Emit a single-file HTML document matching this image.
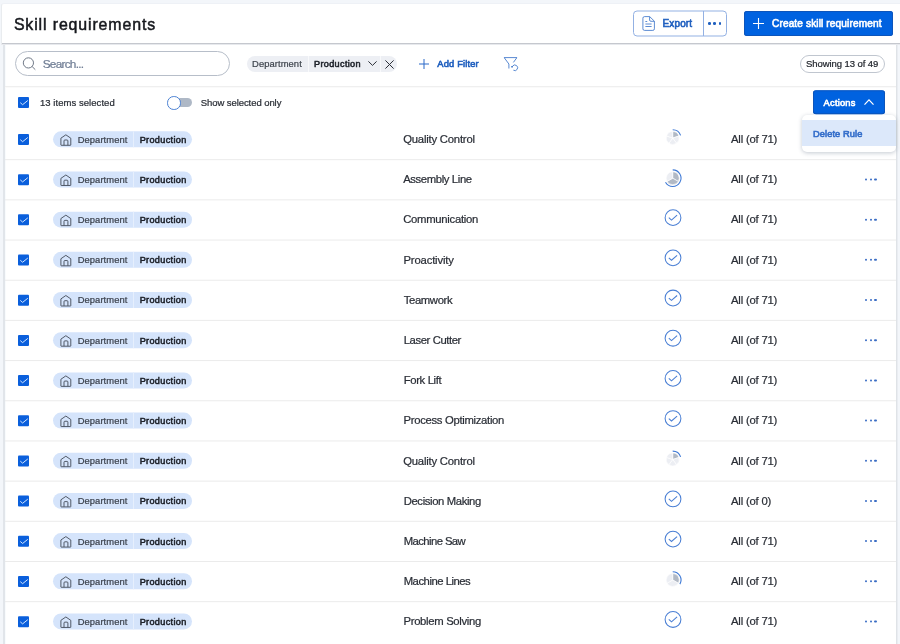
<!DOCTYPE html>
<html lang="en"><head><meta charset="utf-8"><title>Skill requirements</title>
<style>
html,body{margin:0;padding:0}
body{width:900px;height:644px;overflow:hidden;background:#f3f6fa;font-family:"Liberation Sans",sans-serif;position:relative}
.t{position:absolute;white-space:nowrap;display:block}
.abs{position:absolute}
svg{position:absolute;overflow:visible}
.hdr{position:absolute;left:1px;top:3px;width:899px;height:42px;box-sizing:border-box;background:#fff;border-top-left-radius:3px;border-top:1px solid #eef1f6;border-left:1px solid #e9ecef;border-bottom:1px solid #e7e9ed;box-shadow:inset 0 -1px 0 #c5c8ce}
.content{position:absolute;left:3px;top:45px;width:894px;height:599px;box-sizing:border-box;background:#fff;border-left:2px solid #e1e5ea;border-right:1px solid #dfe3e7;box-shadow:1px 0 0 #eaedf2,inset 1px 0 0 #f8fbfd}
.sep{position:absolute;left:5px;width:891px;height:1px;background:#efefef;box-shadow:0 1px 0 #fafafa}
.row{position:absolute;left:0;top:0;width:900px;height:40px}
.cb{position:absolute;left:18px;width:11px;height:11px;background:#0a5fdc;border-radius:1px}
.chip{position:absolute;left:53px;width:138.7px;height:16px;border-radius:8px;background:#d5e4fb}
.chip i{position:absolute;left:80.3px;top:0;width:1px;height:100%;background:#e6effd}
#app{position:absolute;left:0;top:0;width:900px;height:644px;will-change:transform}
</style></head><body><div id="app">

<div class="content"></div>
<div class="hdr"></div>
<span class="t" style="left:13.90px;top:14.80px;font-size:15.9px;line-height:20px;letter-spacing:0.879px;color:#16181d;-webkit-text-stroke:0.5px #16181d;">Skill requirements</span>
<div class="abs" style="left:633px;top:10px;width:94px;height:26px;border:1px solid #93b1e3;border-radius:4px;box-sizing:border-box;transform:translateY(.5px)"></div>
<div class="abs" style="left:703px;top:11px;width:1px;height:25px;background:#93b1e3"></div>
<svg style="left:642px;top:15.7px" width="13" height="15" viewBox="0 0 13 15" fill="none" stroke="#2f6bc6" stroke-opacity=".78" stroke-width="1"><path d="M2.5 .6h5.2l4.7 4.6v7.6a1.6 1.6 0 0 1-1.6 1.6H2.5A1.6 1.6 0 0 1 .9 12.8V2.2A1.6 1.6 0 0 1 2.5 .6z"/><path d="M7.6 .8v3.2a1.3 1.3 0 0 0 1.3 1.3h3.3"/><path d="M3.4 5.5h1.8M3.4 8h6.2M3.4 10.5h6.2"/></svg>
<span class="t" style="left:662.60px;top:17.80px;font-size:10.0px;line-height:12px;letter-spacing:0.100px;color:#1f5fbf;-webkit-text-stroke:0.6px #1f5fbf;">Export</span>
<div class="abs" style="left:708.1px;top:22.3px;width:2.6px;height:2.6px;border-radius:50%;background:#1f5fbf"></div>
<div class="abs" style="left:713.4px;top:22.3px;width:2.6px;height:2.6px;border-radius:50%;background:#1f5fbf"></div>
<div class="abs" style="left:718.7px;top:22.3px;width:2.6px;height:2.6px;border-radius:50%;background:#1f5fbf"></div>
<div class="abs" style="left:744px;top:11px;width:149px;height:25px;background:#0062e0;border-radius:3px;box-shadow:inset 0 0 0 1px #0d55bb"></div>
<svg style="left:752.5px;top:18px" width="11" height="11" viewBox="0 0 11 11" stroke="#fff" stroke-width="1.1"><path d="M5.5 0v11M0 5.5h11"/></svg>
<span class="t" style="left:772.00px;top:17.30px;font-size:10.1px;line-height:13px;letter-spacing:0.124px;color:#fff;-webkit-text-stroke:0.6px #fff;">Create skill requirement</span>
<div class="abs" style="left:15px;top:51px;width:215px;height:25px;box-sizing:border-box;border:1px solid #b7bec9;border-radius:13px;background:#fff"></div>
<svg style="left:22px;top:57px" width="15" height="14" viewBox="0 0 15 14" fill="none" stroke="#6f7886" stroke-width="1"><circle cx="6.4" cy="5.9" r="5.1"/><path d="M10.1 9.5l3.2 3.2"/></svg>
<span class="t" style="left:42.70px;top:56.80px;font-size:11.8px;line-height:15px;letter-spacing:-0.740px;color:#6f7d94;-webkit-text-stroke:0.22px #6f7d94;">Search...</span>
<div class="abs" style="left:246.7px;top:56px;width:150px;height:15.6px;border-radius:8px;background:#edeff4"></div>
<div class="abs" style="left:308px;top:56px;width:1px;height:15.6px;background:#f8f9fb"></div>
<div class="abs" style="left:380px;top:56px;width:1px;height:15.6px;background:#f8f9fb"></div>
<span class="t" style="left:252.10px;top:57.80px;font-size:9.4px;line-height:12px;letter-spacing:0.076px;color:#40464f;-webkit-text-stroke:0.22px #40464f;">Department</span>
<span class="t" style="left:314.00px;top:58.80px;font-size:9.1px;line-height:11px;letter-spacing:0.344px;color:#1d2129;-webkit-text-stroke:0.55px #1d2129;">Production</span>
<svg style="left:367.8px;top:61.2px" width="9" height="5" viewBox="0 0 9 5" fill="none" stroke="#2b2f38" stroke-width="1"><path d="M.4 .4l4.1 4 4.1-4"/></svg>
<svg style="left:384.6px;top:59.6px" width="9" height="9" viewBox="0 0 9 9" fill="none" stroke="#2b2f38" stroke-width="1"><path d="M.4 .4l8.2 8.2M8.6 .4L.4 8.6"/></svg>
<svg style="left:419px;top:58.5px" width="10" height="10" viewBox="0 0 10 10" stroke="#2a68c8" stroke-width="1"><path d="M5 0v10M0 5h10"/></svg>
<span class="t" style="left:437.30px;top:58.30px;font-size:9.3px;line-height:12px;letter-spacing:0.178px;color:#1f5fbf;-webkit-text-stroke:0.6px #1f5fbf;">Add Filter</span>
<svg style="left:503px;top:56px" width="16" height="16" viewBox="0 0 16 16" fill="none" stroke="#2f6bc6" stroke-opacity=".8" stroke-width="1"><path d="M1 1.600H14M1.300 1.800L5.900 8V12.500M13.800 1.800L10.400 6.400"/><path d="M9.600 10.100A2.800 2.800 0 1 1 10.400 14.200"/><rect x="8.300" y="10" width="1.500" height="1.500" fill="#2f6bc6" stroke="none"/></svg>
<div class="abs" style="left:800px;top:55px;width:85px;height:17.5px;box-sizing:border-box;border:1px solid #c0c6cf;border-radius:9px;background:#fff"></div>
<span class="t" style="left:806.10px;top:57.80px;font-size:9.5px;line-height:12px;letter-spacing:-0.081px;color:#23272e;-webkit-text-stroke:0.22px #23272e;">Showing 13 of 49</span>
<div class="sep" style="top:86px"></div>
<div class="cb" style="top:97px"><svg style="left:1.5px;top:2.8px" width="8" height="6" viewBox="0 0 8 6" fill="none" stroke="#d4e7ff" stroke-width="1"><path d="M.3 2.700l2.300 2L7.800 .5"/></svg></div>
<span class="t" style="left:40.00px;top:96.80px;font-size:9.5px;line-height:12px;letter-spacing:0.048px;color:#2a2e36;-webkit-text-stroke:0.22px #2a2e36;">13 items selected</span>
<div class="abs" style="left:170px;top:98.2px;width:22px;height:9px;border-radius:5px;background:#aeb8c6"></div>
<div class="abs" style="left:167px;top:96px;width:11.5px;height:11.5px;border-radius:50%;background:#fff;border:1px solid #4a80d2"></div>
<span class="t" style="left:200.75px;top:96.80px;font-size:9.5px;line-height:12px;letter-spacing:-0.071px;color:#2a2e36;-webkit-text-stroke:0.22px #2a2e36;">Show selected only</span>
<div class="row" style="transform:translateY(119.30px)">
<div class="cb" style="top:15px;transform:translateY(-.3px)"><svg style="left:1.5px;top:2.8px" width="8" height="6" viewBox="0 0 8 6" fill="none" stroke="#d4e7ff" stroke-width="1"><path d="M.3 2.700l2.300 2L7.800 .5"/></svg></div>
<div class="chip" style="top:11.9px"><i></i></div><svg style="left:59.6px;top:13.9px" width="12" height="12.4" viewBox="0 0 12 12.4" fill="none" stroke="#4a5260" stroke-width="0.95" stroke-linejoin="round"><path d="M.9 11.700V4.900L5.850 1.500l4.950 3.400v6.800a.3 .3 0 0 1-.3 .3H1.200a.3 .3 0 0 1-.3-.3z"/><path d="M4 11.900V7.600a.9 .9 0 0 1 .9-.9h2.100a.9 .9 0 0 1 .9 .9v4.300"/></svg>
<span class="t" style="left:77.70px;top:14.80px;font-size:9.4px;line-height:12px;letter-spacing:0.076px;color:#3c424d;-webkit-text-stroke:0.22px #3c424d;">Department</span>
<span class="t" style="left:139.70px;top:15.80px;font-size:9.1px;line-height:11px;letter-spacing:0.344px;color:#1d2129;-webkit-text-stroke:0.55px #1d2129;">Production</span>
<span class="t" style="left:403.20px;top:13.30px;font-size:11.3px;line-height:14px;letter-spacing:-0.210px;color:#2a2e36;-webkit-text-stroke:0.22px #2a2e36;">Quality Control</span>
<svg style="left:0;top:0" width="900" height="40"><path d="M672.70 18.70L672.70 12.20A6.5 6.5 0 0 1 678.88 16.69Z" fill="#b1b9c5" stroke="#fff" stroke-width="0.6"/><path d="M672.70 18.70L678.88 16.69A6.5 6.5 0 0 1 676.52 23.96Z" fill="#eceef3" stroke="#fff" stroke-width="0.6"/><path d="M672.70 18.70L676.52 23.96A6.5 6.5 0 0 1 668.88 23.96Z" fill="#eceef3" stroke="#fff" stroke-width="0.6"/><path d="M672.70 18.70L668.88 23.96A6.5 6.5 0 0 1 666.52 16.69Z" fill="#eceef3" stroke="#fff" stroke-width="0.6"/><path d="M672.70 18.70L666.52 16.69A6.5 6.5 0 0 1 672.70 12.20Z" fill="#eceef3" stroke="#fff" stroke-width="0.6"/><path d="M672.70 10.40A8.3 8.3 0 0 1 680.59 16.14" fill="none" stroke="#3f7ad6" stroke-width="1.1"/></svg>
<span class="t" style="left:731.00px;top:13.30px;font-size:11.3px;line-height:14px;letter-spacing:-0.200px;color:#2a2e36;-webkit-text-stroke:0.22px #2a2e36;">All (of 71)</span>
</div>
<div class="row" style="transform:translateY(159.48px)">
<div class="sep" style="top:0;box-shadow:none;background:#ebebeb;transform:translateY(-.3px)"></div>
<div class="cb" style="top:15px;transform:translateY(-.3px)"><svg style="left:1.5px;top:2.8px" width="8" height="6" viewBox="0 0 8 6" fill="none" stroke="#d4e7ff" stroke-width="1"><path d="M.3 2.700l2.300 2L7.800 .5"/></svg></div>
<div class="chip" style="top:11.9px"><i></i></div><svg style="left:59.6px;top:13.9px" width="12" height="12.4" viewBox="0 0 12 12.4" fill="none" stroke="#4a5260" stroke-width="0.95" stroke-linejoin="round"><path d="M.9 11.700V4.900L5.850 1.500l4.950 3.400v6.800a.3 .3 0 0 1-.3 .3H1.200a.3 .3 0 0 1-.3-.3z"/><path d="M4 11.900V7.600a.9 .9 0 0 1 .9-.9h2.100a.9 .9 0 0 1 .9 .9v4.300"/></svg>
<span class="t" style="left:77.70px;top:14.80px;font-size:9.4px;line-height:12px;letter-spacing:0.076px;color:#3c424d;-webkit-text-stroke:0.22px #3c424d;">Department</span>
<span class="t" style="left:139.70px;top:15.80px;font-size:9.1px;line-height:11px;letter-spacing:0.344px;color:#1d2129;-webkit-text-stroke:0.55px #1d2129;">Production</span>
<span class="t" style="left:403.20px;top:13.30px;font-size:11.3px;line-height:14px;letter-spacing:-0.382px;color:#2a2e36;-webkit-text-stroke:0.22px #2a2e36;">Assembly Line</span>
<svg style="left:0;top:0" width="900" height="40"><path d="M672.70 18.70L672.70 12.20A6.5 6.5 0 0 1 678.33 21.95Z" fill="#b1b9c5" stroke="#fff" stroke-width="0.6"/><path d="M672.70 18.70L678.33 21.95A6.5 6.5 0 0 1 667.07 21.95Z" fill="#b1b9c5" stroke="#fff" stroke-width="0.6"/><path d="M672.70 18.70L667.07 21.95A6.5 6.5 0 0 1 672.70 12.20Z" fill="#eceef3" stroke="#fff" stroke-width="0.6"/><path d="M672.70 10.40A8.3 8.3 0 1 1 665.51 22.85" fill="none" stroke="#3f7ad6" stroke-width="1.1"/></svg>
<span class="t" style="left:731.00px;top:13.30px;font-size:11.3px;line-height:14px;letter-spacing:-0.200px;color:#2a2e36;-webkit-text-stroke:0.22px #2a2e36;">All (of 71)</span>
<div class="abs" style="left:864.95px;top:19.20px;width:2.3px;height:2.3px;border-radius:50%;background:#3a6dc4"></div>
<div class="abs" style="left:869.65px;top:19.20px;width:2.3px;height:2.3px;border-radius:50%;background:#3a6dc4"></div>
<div class="abs" style="left:874.35px;top:19.20px;width:2.3px;height:2.3px;border-radius:50%;background:#3a6dc4"></div>
</div>
<div class="row" style="transform:translateY(199.66px)">
<div class="sep" style="top:0;box-shadow:none;background:#ebebeb;transform:translateY(-.3px)"></div>
<div class="cb" style="top:15px;transform:translateY(-.3px)"><svg style="left:1.5px;top:2.8px" width="8" height="6" viewBox="0 0 8 6" fill="none" stroke="#d4e7ff" stroke-width="1"><path d="M.3 2.700l2.300 2L7.800 .5"/></svg></div>
<div class="chip" style="top:11.9px"><i></i></div><svg style="left:59.6px;top:13.9px" width="12" height="12.4" viewBox="0 0 12 12.4" fill="none" stroke="#4a5260" stroke-width="0.95" stroke-linejoin="round"><path d="M.9 11.700V4.900L5.850 1.500l4.950 3.400v6.800a.3 .3 0 0 1-.3 .3H1.200a.3 .3 0 0 1-.3-.3z"/><path d="M4 11.900V7.600a.9 .9 0 0 1 .9-.9h2.100a.9 .9 0 0 1 .9 .9v4.300"/></svg>
<span class="t" style="left:77.70px;top:13.80px;font-size:9.4px;line-height:12px;letter-spacing:0.076px;color:#3c424d;-webkit-text-stroke:0.22px #3c424d;">Department</span>
<span class="t" style="left:139.70px;top:14.80px;font-size:9.1px;line-height:11px;letter-spacing:0.344px;color:#1d2129;-webkit-text-stroke:0.55px #1d2129;">Production</span>
<span class="t" style="left:403.20px;top:12.30px;font-size:11.3px;line-height:14px;letter-spacing:-0.283px;color:#2a2e36;-webkit-text-stroke:0.22px #2a2e36;">Communication</span>
<svg style="left:663.50px;top:9.10px" width="18" height="18" viewBox="0 0 18 18" fill="none" stroke="#4a7fd4" stroke-width="1.05"><circle cx="9" cy="9" r="7.9"/><path d="M4.8 9l2.7 2.4 5.6-4.9"/></svg>
<span class="t" style="left:731.00px;top:12.30px;font-size:11.3px;line-height:14px;letter-spacing:-0.200px;color:#2a2e36;-webkit-text-stroke:0.22px #2a2e36;">All (of 71)</span>
<div class="abs" style="left:864.95px;top:19.20px;width:2.3px;height:2.3px;border-radius:50%;background:#3a6dc4"></div>
<div class="abs" style="left:869.65px;top:19.20px;width:2.3px;height:2.3px;border-radius:50%;background:#3a6dc4"></div>
<div class="abs" style="left:874.35px;top:19.20px;width:2.3px;height:2.3px;border-radius:50%;background:#3a6dc4"></div>
</div>
<div class="row" style="transform:translateY(239.84px)">
<div class="sep" style="top:0;box-shadow:none;background:#ebebeb;transform:translateY(-.3px)"></div>
<div class="cb" style="top:15px;transform:translateY(-.3px)"><svg style="left:1.5px;top:2.8px" width="8" height="6" viewBox="0 0 8 6" fill="none" stroke="#d4e7ff" stroke-width="1"><path d="M.3 2.700l2.300 2L7.800 .5"/></svg></div>
<div class="chip" style="top:11.9px"><i></i></div><svg style="left:59.6px;top:13.9px" width="12" height="12.4" viewBox="0 0 12 12.4" fill="none" stroke="#4a5260" stroke-width="0.95" stroke-linejoin="round"><path d="M.9 11.700V4.900L5.850 1.500l4.950 3.400v6.800a.3 .3 0 0 1-.3 .3H1.200a.3 .3 0 0 1-.3-.3z"/><path d="M4 11.900V7.600a.9 .9 0 0 1 .9-.9h2.100a.9 .9 0 0 1 .9 .9v4.300"/></svg>
<span class="t" style="left:77.70px;top:13.80px;font-size:9.4px;line-height:12px;letter-spacing:0.076px;color:#3c424d;-webkit-text-stroke:0.22px #3c424d;">Department</span>
<span class="t" style="left:139.70px;top:14.80px;font-size:9.1px;line-height:11px;letter-spacing:0.344px;color:#1d2129;-webkit-text-stroke:0.55px #1d2129;">Production</span>
<span class="t" style="left:403.50px;top:13.30px;font-size:11.3px;line-height:14px;letter-spacing:-0.172px;color:#2a2e36;-webkit-text-stroke:0.22px #2a2e36;">Proactivity</span>
<svg style="left:663.50px;top:9.10px" width="18" height="18" viewBox="0 0 18 18" fill="none" stroke="#4a7fd4" stroke-width="1.05"><circle cx="9" cy="9" r="7.9"/><path d="M4.8 9l2.7 2.4 5.6-4.9"/></svg>
<span class="t" style="left:731.00px;top:13.30px;font-size:11.3px;line-height:14px;letter-spacing:-0.200px;color:#2a2e36;-webkit-text-stroke:0.22px #2a2e36;">All (of 71)</span>
<div class="abs" style="left:864.95px;top:19.20px;width:2.3px;height:2.3px;border-radius:50%;background:#3a6dc4"></div>
<div class="abs" style="left:869.65px;top:19.20px;width:2.3px;height:2.3px;border-radius:50%;background:#3a6dc4"></div>
<div class="abs" style="left:874.35px;top:19.20px;width:2.3px;height:2.3px;border-radius:50%;background:#3a6dc4"></div>
</div>
<div class="row" style="transform:translateY(280.02px)">
<div class="sep" style="top:0;box-shadow:none;background:#ebebeb;transform:translateY(-.3px)"></div>
<div class="cb" style="top:15px;transform:translateY(-.3px)"><svg style="left:1.5px;top:2.8px" width="8" height="6" viewBox="0 0 8 6" fill="none" stroke="#d4e7ff" stroke-width="1"><path d="M.3 2.700l2.300 2L7.800 .5"/></svg></div>
<div class="chip" style="top:11.9px"><i></i></div><svg style="left:59.6px;top:13.9px" width="12" height="12.4" viewBox="0 0 12 12.4" fill="none" stroke="#4a5260" stroke-width="0.95" stroke-linejoin="round"><path d="M.9 11.700V4.900L5.850 1.500l4.950 3.400v6.800a.3 .3 0 0 1-.3 .3H1.200a.3 .3 0 0 1-.3-.3z"/><path d="M4 11.900V7.600a.9 .9 0 0 1 .9-.9h2.100a.9 .9 0 0 1 .9 .9v4.300"/></svg>
<span class="t" style="left:77.70px;top:13.80px;font-size:9.4px;line-height:12px;letter-spacing:0.076px;color:#3c424d;-webkit-text-stroke:0.22px #3c424d;">Department</span>
<span class="t" style="left:139.70px;top:14.80px;font-size:9.1px;line-height:11px;letter-spacing:0.344px;color:#1d2129;-webkit-text-stroke:0.55px #1d2129;">Production</span>
<span class="t" style="left:403.70px;top:13.30px;font-size:11.3px;line-height:14px;letter-spacing:-0.360px;color:#2a2e36;-webkit-text-stroke:0.22px #2a2e36;">Teamwork</span>
<svg style="left:663.50px;top:9.10px" width="18" height="18" viewBox="0 0 18 18" fill="none" stroke="#4a7fd4" stroke-width="1.05"><circle cx="9" cy="9" r="7.9"/><path d="M4.8 9l2.7 2.4 5.6-4.9"/></svg>
<span class="t" style="left:731.00px;top:13.30px;font-size:11.3px;line-height:14px;letter-spacing:-0.200px;color:#2a2e36;-webkit-text-stroke:0.22px #2a2e36;">All (of 71)</span>
<div class="abs" style="left:864.95px;top:19.20px;width:2.3px;height:2.3px;border-radius:50%;background:#3a6dc4"></div>
<div class="abs" style="left:869.65px;top:19.20px;width:2.3px;height:2.3px;border-radius:50%;background:#3a6dc4"></div>
<div class="abs" style="left:874.35px;top:19.20px;width:2.3px;height:2.3px;border-radius:50%;background:#3a6dc4"></div>
</div>
<div class="row" style="transform:translateY(320.20px)">
<div class="sep" style="top:0;box-shadow:none;background:#ebebeb;transform:translateY(-.3px)"></div>
<div class="cb" style="top:15px;transform:translateY(-.3px)"><svg style="left:1.5px;top:2.8px" width="8" height="6" viewBox="0 0 8 6" fill="none" stroke="#d4e7ff" stroke-width="1"><path d="M.3 2.700l2.300 2L7.800 .5"/></svg></div>
<div class="chip" style="top:11.9px"><i></i></div><svg style="left:59.6px;top:13.9px" width="12" height="12.4" viewBox="0 0 12 12.4" fill="none" stroke="#4a5260" stroke-width="0.95" stroke-linejoin="round"><path d="M.9 11.700V4.900L5.850 1.500l4.950 3.400v6.800a.3 .3 0 0 1-.3 .3H1.200a.3 .3 0 0 1-.3-.3z"/><path d="M4 11.900V7.600a.9 .9 0 0 1 .9-.9h2.100a.9 .9 0 0 1 .9 .9v4.300"/></svg>
<span class="t" style="left:77.70px;top:14.80px;font-size:9.4px;line-height:12px;letter-spacing:0.076px;color:#3c424d;-webkit-text-stroke:0.22px #3c424d;">Department</span>
<span class="t" style="left:139.70px;top:15.80px;font-size:9.1px;line-height:11px;letter-spacing:0.344px;color:#1d2129;-webkit-text-stroke:0.55px #1d2129;">Production</span>
<span class="t" style="left:403.70px;top:13.30px;font-size:11.3px;line-height:14px;letter-spacing:-0.407px;color:#2a2e36;-webkit-text-stroke:0.22px #2a2e36;">Laser Cutter</span>
<svg style="left:663.50px;top:9.10px" width="18" height="18" viewBox="0 0 18 18" fill="none" stroke="#4a7fd4" stroke-width="1.05"><circle cx="9" cy="9" r="7.9"/><path d="M4.8 9l2.7 2.4 5.6-4.9"/></svg>
<span class="t" style="left:731.00px;top:13.30px;font-size:11.3px;line-height:14px;letter-spacing:-0.200px;color:#2a2e36;-webkit-text-stroke:0.22px #2a2e36;">All (of 71)</span>
<div class="abs" style="left:864.95px;top:19.20px;width:2.3px;height:2.3px;border-radius:50%;background:#3a6dc4"></div>
<div class="abs" style="left:869.65px;top:19.20px;width:2.3px;height:2.3px;border-radius:50%;background:#3a6dc4"></div>
<div class="abs" style="left:874.35px;top:19.20px;width:2.3px;height:2.3px;border-radius:50%;background:#3a6dc4"></div>
</div>
<div class="row" style="transform:translateY(360.38px)">
<div class="sep" style="top:0;box-shadow:none;background:#ebebeb;transform:translateY(-.3px)"></div>
<div class="cb" style="top:15px;transform:translateY(-.3px)"><svg style="left:1.5px;top:2.8px" width="8" height="6" viewBox="0 0 8 6" fill="none" stroke="#d4e7ff" stroke-width="1"><path d="M.3 2.700l2.300 2L7.800 .5"/></svg></div>
<div class="chip" style="top:11.9px"><i></i></div><svg style="left:59.6px;top:13.9px" width="12" height="12.4" viewBox="0 0 12 12.4" fill="none" stroke="#4a5260" stroke-width="0.95" stroke-linejoin="round"><path d="M.9 11.700V4.900L5.850 1.500l4.950 3.400v6.800a.3 .3 0 0 1-.3 .3H1.200a.3 .3 0 0 1-.3-.3z"/><path d="M4 11.900V7.600a.9 .9 0 0 1 .9-.9h2.100a.9 .9 0 0 1 .9 .9v4.300"/></svg>
<span class="t" style="left:77.70px;top:14.80px;font-size:9.4px;line-height:12px;letter-spacing:0.076px;color:#3c424d;-webkit-text-stroke:0.22px #3c424d;">Department</span>
<span class="t" style="left:139.70px;top:15.80px;font-size:9.1px;line-height:11px;letter-spacing:0.344px;color:#1d2129;-webkit-text-stroke:0.55px #1d2129;">Production</span>
<span class="t" style="left:403.70px;top:13.30px;font-size:11.3px;line-height:14px;letter-spacing:-0.352px;color:#2a2e36;-webkit-text-stroke:0.22px #2a2e36;">Fork Lift</span>
<svg style="left:663.50px;top:9.10px" width="18" height="18" viewBox="0 0 18 18" fill="none" stroke="#4a7fd4" stroke-width="1.05"><circle cx="9" cy="9" r="7.9"/><path d="M4.8 9l2.7 2.4 5.6-4.9"/></svg>
<span class="t" style="left:731.00px;top:13.30px;font-size:11.3px;line-height:14px;letter-spacing:-0.200px;color:#2a2e36;-webkit-text-stroke:0.22px #2a2e36;">All (of 71)</span>
<div class="abs" style="left:864.95px;top:19.20px;width:2.3px;height:2.3px;border-radius:50%;background:#3a6dc4"></div>
<div class="abs" style="left:869.65px;top:19.20px;width:2.3px;height:2.3px;border-radius:50%;background:#3a6dc4"></div>
<div class="abs" style="left:874.35px;top:19.20px;width:2.3px;height:2.3px;border-radius:50%;background:#3a6dc4"></div>
</div>
<div class="row" style="transform:translateY(400.56px)">
<div class="sep" style="top:0;box-shadow:none;background:#ebebeb;transform:translateY(-.3px)"></div>
<div class="cb" style="top:15px;transform:translateY(-.3px)"><svg style="left:1.5px;top:2.8px" width="8" height="6" viewBox="0 0 8 6" fill="none" stroke="#d4e7ff" stroke-width="1"><path d="M.3 2.700l2.300 2L7.800 .5"/></svg></div>
<div class="chip" style="top:11.9px"><i></i></div><svg style="left:59.6px;top:13.9px" width="12" height="12.4" viewBox="0 0 12 12.4" fill="none" stroke="#4a5260" stroke-width="0.95" stroke-linejoin="round"><path d="M.9 11.700V4.900L5.850 1.500l4.950 3.400v6.800a.3 .3 0 0 1-.3 .3H1.200a.3 .3 0 0 1-.3-.3z"/><path d="M4 11.900V7.600a.9 .9 0 0 1 .9-.9h2.100a.9 .9 0 0 1 .9 .9v4.300"/></svg>
<span class="t" style="left:77.70px;top:13.80px;font-size:9.4px;line-height:12px;letter-spacing:0.076px;color:#3c424d;-webkit-text-stroke:0.22px #3c424d;">Department</span>
<span class="t" style="left:139.70px;top:14.80px;font-size:9.1px;line-height:11px;letter-spacing:0.344px;color:#1d2129;-webkit-text-stroke:0.55px #1d2129;">Production</span>
<span class="t" style="left:403.50px;top:12.30px;font-size:11.3px;line-height:14px;letter-spacing:-0.309px;color:#2a2e36;-webkit-text-stroke:0.22px #2a2e36;">Process Optimization</span>
<svg style="left:663.50px;top:9.10px" width="18" height="18" viewBox="0 0 18 18" fill="none" stroke="#4a7fd4" stroke-width="1.05"><circle cx="9" cy="9" r="7.9"/><path d="M4.8 9l2.7 2.4 5.6-4.9"/></svg>
<span class="t" style="left:731.00px;top:12.30px;font-size:11.3px;line-height:14px;letter-spacing:-0.200px;color:#2a2e36;-webkit-text-stroke:0.22px #2a2e36;">All (of 71)</span>
<div class="abs" style="left:864.95px;top:19.20px;width:2.3px;height:2.3px;border-radius:50%;background:#3a6dc4"></div>
<div class="abs" style="left:869.65px;top:19.20px;width:2.3px;height:2.3px;border-radius:50%;background:#3a6dc4"></div>
<div class="abs" style="left:874.35px;top:19.20px;width:2.3px;height:2.3px;border-radius:50%;background:#3a6dc4"></div>
</div>
<div class="row" style="transform:translateY(440.74px)">
<div class="sep" style="top:0;box-shadow:none;background:#ebebeb;transform:translateY(-.3px)"></div>
<div class="cb" style="top:15px;transform:translateY(-.3px)"><svg style="left:1.5px;top:2.8px" width="8" height="6" viewBox="0 0 8 6" fill="none" stroke="#d4e7ff" stroke-width="1"><path d="M.3 2.700l2.300 2L7.800 .5"/></svg></div>
<div class="chip" style="top:11.9px"><i></i></div><svg style="left:59.6px;top:13.9px" width="12" height="12.4" viewBox="0 0 12 12.4" fill="none" stroke="#4a5260" stroke-width="0.95" stroke-linejoin="round"><path d="M.9 11.700V4.900L5.850 1.500l4.950 3.400v6.800a.3 .3 0 0 1-.3 .3H1.200a.3 .3 0 0 1-.3-.3z"/><path d="M4 11.900V7.600a.9 .9 0 0 1 .9-.9h2.100a.9 .9 0 0 1 .9 .9v4.300"/></svg>
<span class="t" style="left:77.70px;top:13.80px;font-size:9.4px;line-height:12px;letter-spacing:0.076px;color:#3c424d;-webkit-text-stroke:0.22px #3c424d;">Department</span>
<span class="t" style="left:139.70px;top:14.80px;font-size:9.1px;line-height:11px;letter-spacing:0.344px;color:#1d2129;-webkit-text-stroke:0.55px #1d2129;">Production</span>
<span class="t" style="left:403.20px;top:13.30px;font-size:11.3px;line-height:14px;letter-spacing:-0.210px;color:#2a2e36;-webkit-text-stroke:0.22px #2a2e36;">Quality Control</span>
<svg style="left:0;top:0" width="900" height="40"><path d="M672.70 18.70L672.70 12.20A6.5 6.5 0 0 1 678.88 16.69Z" fill="#b1b9c5" stroke="#fff" stroke-width="0.6"/><path d="M672.70 18.70L678.88 16.69A6.5 6.5 0 0 1 676.52 23.96Z" fill="#eceef3" stroke="#fff" stroke-width="0.6"/><path d="M672.70 18.70L676.52 23.96A6.5 6.5 0 0 1 668.88 23.96Z" fill="#eceef3" stroke="#fff" stroke-width="0.6"/><path d="M672.70 18.70L668.88 23.96A6.5 6.5 0 0 1 666.52 16.69Z" fill="#eceef3" stroke="#fff" stroke-width="0.6"/><path d="M672.70 18.70L666.52 16.69A6.5 6.5 0 0 1 672.70 12.20Z" fill="#eceef3" stroke="#fff" stroke-width="0.6"/><path d="M672.70 10.40A8.3 8.3 0 0 1 680.59 16.14" fill="none" stroke="#3f7ad6" stroke-width="1.1"/></svg>
<span class="t" style="left:731.00px;top:13.30px;font-size:11.3px;line-height:14px;letter-spacing:-0.200px;color:#2a2e36;-webkit-text-stroke:0.22px #2a2e36;">All (of 71)</span>
<div class="abs" style="left:864.95px;top:19.20px;width:2.3px;height:2.3px;border-radius:50%;background:#3a6dc4"></div>
<div class="abs" style="left:869.65px;top:19.20px;width:2.3px;height:2.3px;border-radius:50%;background:#3a6dc4"></div>
<div class="abs" style="left:874.35px;top:19.20px;width:2.3px;height:2.3px;border-radius:50%;background:#3a6dc4"></div>
</div>
<div class="row" style="transform:translateY(480.92px)">
<div class="sep" style="top:0;box-shadow:none;background:#ebebeb;transform:translateY(-.3px)"></div>
<div class="cb" style="top:15px;transform:translateY(-.3px)"><svg style="left:1.5px;top:2.8px" width="8" height="6" viewBox="0 0 8 6" fill="none" stroke="#d4e7ff" stroke-width="1"><path d="M.3 2.700l2.300 2L7.800 .5"/></svg></div>
<div class="chip" style="top:11.9px"><i></i></div><svg style="left:59.6px;top:13.9px" width="12" height="12.4" viewBox="0 0 12 12.4" fill="none" stroke="#4a5260" stroke-width="0.95" stroke-linejoin="round"><path d="M.9 11.700V4.900L5.850 1.500l4.950 3.400v6.800a.3 .3 0 0 1-.3 .3H1.200a.3 .3 0 0 1-.3-.3z"/><path d="M4 11.900V7.600a.9 .9 0 0 1 .9-.9h2.100a.9 .9 0 0 1 .9 .9v4.300"/></svg>
<span class="t" style="left:77.70px;top:13.80px;font-size:9.4px;line-height:12px;letter-spacing:0.076px;color:#3c424d;-webkit-text-stroke:0.22px #3c424d;">Department</span>
<span class="t" style="left:139.70px;top:14.80px;font-size:9.1px;line-height:11px;letter-spacing:0.344px;color:#1d2129;-webkit-text-stroke:0.55px #1d2129;">Production</span>
<span class="t" style="left:403.70px;top:13.30px;font-size:11.3px;line-height:14px;letter-spacing:-0.378px;color:#2a2e36;-webkit-text-stroke:0.22px #2a2e36;">Decision Making</span>
<svg style="left:663.50px;top:9.10px" width="18" height="18" viewBox="0 0 18 18" fill="none" stroke="#4a7fd4" stroke-width="1.05"><circle cx="9" cy="9" r="7.9"/><path d="M4.8 9l2.7 2.4 5.6-4.9"/></svg>
<span class="t" style="left:731.00px;top:13.30px;font-size:11.3px;line-height:14px;letter-spacing:-0.200px;color:#2a2e36;-webkit-text-stroke:0.22px #2a2e36;">All (of 0)</span>
<div class="abs" style="left:864.95px;top:19.20px;width:2.3px;height:2.3px;border-radius:50%;background:#3a6dc4"></div>
<div class="abs" style="left:869.65px;top:19.20px;width:2.3px;height:2.3px;border-radius:50%;background:#3a6dc4"></div>
<div class="abs" style="left:874.35px;top:19.20px;width:2.3px;height:2.3px;border-radius:50%;background:#3a6dc4"></div>
</div>
<div class="row" style="transform:translateY(521.10px)">
<div class="sep" style="top:0;box-shadow:none;background:#ebebeb;transform:translateY(-.3px)"></div>
<div class="cb" style="top:15px;transform:translateY(-.3px)"><svg style="left:1.5px;top:2.8px" width="8" height="6" viewBox="0 0 8 6" fill="none" stroke="#d4e7ff" stroke-width="1"><path d="M.3 2.700l2.300 2L7.800 .5"/></svg></div>
<div class="chip" style="top:11.9px"><i></i></div><svg style="left:59.6px;top:13.9px" width="12" height="12.4" viewBox="0 0 12 12.4" fill="none" stroke="#4a5260" stroke-width="0.95" stroke-linejoin="round"><path d="M.9 11.700V4.900L5.850 1.500l4.950 3.400v6.800a.3 .3 0 0 1-.3 .3H1.200a.3 .3 0 0 1-.3-.3z"/><path d="M4 11.900V7.600a.9 .9 0 0 1 .9-.9h2.100a.9 .9 0 0 1 .9 .9v4.300"/></svg>
<span class="t" style="left:77.70px;top:14.80px;font-size:9.4px;line-height:12px;letter-spacing:0.076px;color:#3c424d;-webkit-text-stroke:0.22px #3c424d;">Department</span>
<span class="t" style="left:139.70px;top:15.80px;font-size:9.1px;line-height:11px;letter-spacing:0.344px;color:#1d2129;-webkit-text-stroke:0.55px #1d2129;">Production</span>
<span class="t" style="left:403.70px;top:13.30px;font-size:11.3px;line-height:14px;letter-spacing:-0.577px;color:#2a2e36;-webkit-text-stroke:0.22px #2a2e36;">Machine Saw</span>
<svg style="left:663.50px;top:9.10px" width="18" height="18" viewBox="0 0 18 18" fill="none" stroke="#4a7fd4" stroke-width="1.05"><circle cx="9" cy="9" r="7.9"/><path d="M4.8 9l2.7 2.4 5.6-4.9"/></svg>
<span class="t" style="left:731.00px;top:13.30px;font-size:11.3px;line-height:14px;letter-spacing:-0.200px;color:#2a2e36;-webkit-text-stroke:0.22px #2a2e36;">All (of 71)</span>
<div class="abs" style="left:864.95px;top:19.20px;width:2.3px;height:2.3px;border-radius:50%;background:#3a6dc4"></div>
<div class="abs" style="left:869.65px;top:19.20px;width:2.3px;height:2.3px;border-radius:50%;background:#3a6dc4"></div>
<div class="abs" style="left:874.35px;top:19.20px;width:2.3px;height:2.3px;border-radius:50%;background:#3a6dc4"></div>
</div>
<div class="row" style="transform:translateY(561.28px)">
<div class="sep" style="top:0;box-shadow:none;background:#ebebeb;transform:translateY(-.3px)"></div>
<div class="cb" style="top:15px;transform:translateY(-.3px)"><svg style="left:1.5px;top:2.8px" width="8" height="6" viewBox="0 0 8 6" fill="none" stroke="#d4e7ff" stroke-width="1"><path d="M.3 2.700l2.300 2L7.800 .5"/></svg></div>
<div class="chip" style="top:11.9px"><i></i></div><svg style="left:59.6px;top:13.9px" width="12" height="12.4" viewBox="0 0 12 12.4" fill="none" stroke="#4a5260" stroke-width="0.95" stroke-linejoin="round"><path d="M.9 11.700V4.900L5.850 1.500l4.950 3.400v6.800a.3 .3 0 0 1-.3 .3H1.200a.3 .3 0 0 1-.3-.3z"/><path d="M4 11.900V7.600a.9 .9 0 0 1 .9-.9h2.100a.9 .9 0 0 1 .9 .9v4.300"/></svg>
<span class="t" style="left:77.70px;top:14.80px;font-size:9.4px;line-height:12px;letter-spacing:0.076px;color:#3c424d;-webkit-text-stroke:0.22px #3c424d;">Department</span>
<span class="t" style="left:139.70px;top:15.80px;font-size:9.1px;line-height:11px;letter-spacing:0.344px;color:#1d2129;-webkit-text-stroke:0.55px #1d2129;">Production</span>
<span class="t" style="left:403.70px;top:13.30px;font-size:11.3px;line-height:14px;letter-spacing:-0.480px;color:#2a2e36;-webkit-text-stroke:0.22px #2a2e36;">Machine Lines</span>
<svg style="left:0;top:0" width="900" height="40"><path d="M672.70 18.70L672.70 12.20A6.5 6.5 0 0 1 678.33 21.95Z" fill="#b1b9c5" stroke="#fff" stroke-width="0.6"/><path d="M672.70 18.70L678.33 21.95A6.5 6.5 0 0 1 667.07 21.95Z" fill="#eceef3" stroke="#fff" stroke-width="0.6"/><path d="M672.70 18.70L667.07 21.95A6.5 6.5 0 0 1 672.70 12.20Z" fill="#eceef3" stroke="#fff" stroke-width="0.6"/><path d="M672.70 10.40A8.3 8.3 0 0 1 679.89 22.85" fill="none" stroke="#3f7ad6" stroke-width="1.1"/></svg>
<span class="t" style="left:731.00px;top:13.30px;font-size:11.3px;line-height:14px;letter-spacing:-0.200px;color:#2a2e36;-webkit-text-stroke:0.22px #2a2e36;">All (of 71)</span>
<div class="abs" style="left:864.95px;top:19.20px;width:2.3px;height:2.3px;border-radius:50%;background:#3a6dc4"></div>
<div class="abs" style="left:869.65px;top:19.20px;width:2.3px;height:2.3px;border-radius:50%;background:#3a6dc4"></div>
<div class="abs" style="left:874.35px;top:19.20px;width:2.3px;height:2.3px;border-radius:50%;background:#3a6dc4"></div>
</div>
<div class="row" style="transform:translateY(601.46px)">
<div class="sep" style="top:0;box-shadow:none;background:#ebebeb;transform:translateY(-.3px)"></div>
<div class="cb" style="top:15px;transform:translateY(-.3px)"><svg style="left:1.5px;top:2.8px" width="8" height="6" viewBox="0 0 8 6" fill="none" stroke="#d4e7ff" stroke-width="1"><path d="M.3 2.700l2.300 2L7.800 .5"/></svg></div>
<div class="chip" style="top:11.9px"><i></i></div><svg style="left:59.6px;top:13.9px" width="12" height="12.4" viewBox="0 0 12 12.4" fill="none" stroke="#4a5260" stroke-width="0.95" stroke-linejoin="round"><path d="M.9 11.700V4.900L5.850 1.500l4.950 3.400v6.800a.3 .3 0 0 1-.3 .3H1.200a.3 .3 0 0 1-.3-.3z"/><path d="M4 11.900V7.600a.9 .9 0 0 1 .9-.9h2.100a.9 .9 0 0 1 .9 .9v4.300"/></svg>
<span class="t" style="left:77.70px;top:14.80px;font-size:9.4px;line-height:12px;letter-spacing:0.076px;color:#3c424d;-webkit-text-stroke:0.22px #3c424d;">Department</span>
<span class="t" style="left:139.70px;top:15.80px;font-size:9.1px;line-height:11px;letter-spacing:0.344px;color:#1d2129;-webkit-text-stroke:0.55px #1d2129;">Production</span>
<span class="t" style="left:403.50px;top:13.30px;font-size:11.3px;line-height:14px;letter-spacing:-0.320px;color:#2a2e36;-webkit-text-stroke:0.22px #2a2e36;">Problem Solving</span>
<svg style="left:663.50px;top:9.10px" width="18" height="18" viewBox="0 0 18 18" fill="none" stroke="#4a7fd4" stroke-width="1.05"><circle cx="9" cy="9" r="7.9"/><path d="M4.8 9l2.7 2.4 5.6-4.9"/></svg>
<span class="t" style="left:731.00px;top:13.30px;font-size:11.3px;line-height:14px;letter-spacing:-0.200px;color:#2a2e36;-webkit-text-stroke:0.22px #2a2e36;">All (of 71)</span>
<div class="abs" style="left:864.95px;top:19.20px;width:2.3px;height:2.3px;border-radius:50%;background:#3a6dc4"></div>
<div class="abs" style="left:869.65px;top:19.20px;width:2.3px;height:2.3px;border-radius:50%;background:#3a6dc4"></div>
<div class="abs" style="left:874.35px;top:19.20px;width:2.3px;height:2.3px;border-radius:50%;background:#3a6dc4"></div>
</div>
<div class="abs" style="left:813px;top:90px;width:72px;height:24px;background:#0062e0;border-radius:3px;box-shadow:inset 0 0 0 1px #0d55bb;transform:translateY(.3px)"></div>
<span class="t" style="left:823.60px;top:97.30px;font-size:9.3px;line-height:12px;letter-spacing:0.218px;color:#fff;-webkit-text-stroke:0.6px #fff;">Actions</span>
<svg style="left:864.3px;top:99px" width="10" height="6" viewBox="0 0 10 6" fill="none" stroke="#fff" stroke-width="1.25"><path d="M.5 5.6L5 .9l4.5 4.7"/></svg>
<div class="abs" style="left:801.6px;top:114.6px;width:94.5px;height:37.2px;background:#fff;border-radius:5px;box-shadow:0 1px 4px rgba(40,60,90,.28)"></div>
<div class="abs" style="left:801.6px;top:120px;width:94.5px;height:25.8px;background:#dce8fa"></div>
<span class="t" style="left:813.00px;top:128.30px;font-size:9.3px;line-height:12px;letter-spacing:0.081px;color:#336dca;-webkit-text-stroke:0.6px #336dca;">Delete Rule</span>
</div></body></html>
